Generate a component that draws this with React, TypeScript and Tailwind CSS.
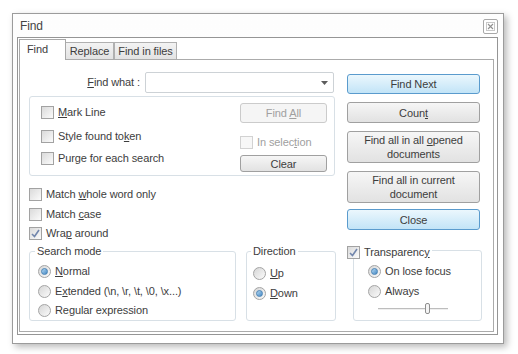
import type { ReactNode } from "react";

const ink = "text-[#3d3d3d]";

function Check({ checked, disabled }: { checked?: boolean; disabled?: boolean }) {
  return (
    <span
      className={`flex h-[13px] w-[13px] shrink-0 items-center justify-center border ${
        disabled ? "border-[#d2d2d2] bg-[#f7f7f7]" : "border-[#a2a2a2] bg-gradient-to-br from-[#dadada] to-[#fbfbfb]"
      }`}
    >
      {checked && (
        <svg width="11" height="11" viewBox="0 0 11 11">
          <path d="M2 6 L4.5 8.5 L9 2" fill="none" stroke="#7286ac" strokeWidth="1.6" />
        </svg>
      )}
    </span>
  );
}

function Radio({ on }: { on?: boolean }) {
  return (
    <span className="flex h-[13px] w-[13px] shrink-0 items-center justify-center rounded-full border border-[#a4a4a4] bg-gradient-to-br from-[#d6d6d6] to-[#fbfbfb]">
      {on && (
        <span className="h-[7px] w-[7px] rounded-full border border-[#4a84b6] bg-gradient-to-br from-[#b3d8f2] to-[#4589c4]" />
      )}
    </span>
  );
}

function Row({ children, box, className = "" }: { children: ReactNode; box: ReactNode; className?: string }) {
  return (
    <div className={`flex h-[13px] items-center gap-[4px] ${className}`}>
      {box}
      <span className="whitespace-nowrap leading-[13px]">{children}</span>
    </div>
  );
}

function Btn({
  children,
  blue,
  disabled,
  className = "",
}: {
  children: ReactNode;
  blue?: boolean;
  disabled?: boolean;
  className?: string;
}) {
  const skin = blue
    ? "border-[#5a9bcd] bg-gradient-to-b from-[#ebf7fd] to-[#c2e4f7]"
    : disabled
      ? "border-[#cbcbcb] bg-[#f5f5f5] text-[#a0a0a0]"
      : "border-[#a0a0a0] bg-gradient-to-b from-[#f6f6f6] to-[#e2e2e2]";
  return (
    <div
      className={`flex items-center justify-center rounded-[3px] border text-center leading-[14px] ${skin} ${className}`}
    >
      {children}
    </div>
  );
}

function Group({ title, className = "", children }: { title: string; className?: string; children: ReactNode }) {
  return (
    <fieldset className={`rounded-[3px] border border-[#d8e0e6] ${className}`}>
      <legend className="leading-[13px]">{title}</legend>
      {children}
    </fieldset>
  );
}

export default function App() {
  return (
    <div
      className={`h-[354px] w-[518px] overflow-hidden bg-white pl-[12px] pt-[13px] text-[11px] tracking-[-0.1px] ${ink} font-['Liberation_Sans',Arial,sans-serif]`}
    >
      <div className="flex h-[331px] w-[492px] flex-col border border-[#9b9b9b] bg-gradient-to-b from-[#fdfdfd] to-white shadow-[3px_3px_7px_rgba(0,0,0,0.28)]">
        {/* title bar */}
        <div className="flex h-[23px] items-start justify-between pl-[7px] pr-[5px]">
          <span className="pt-[5px] text-[12px] leading-[14px] text-[#444]">Find</span>
          <div className="mt-[5px] flex h-[15px] w-[15px] items-center justify-center rounded-[2px] border border-[#a8a8a8] bg-white">
            <svg width="9" height="9" viewBox="0 0 9 9">
              <rect x="0.5" y="0.5" width="8" height="8" fill="none" stroke="#c8c8c8" />
              <path d="M2 2 L7 7 M7 2 L2 7" stroke="#909090" strokeWidth="1.1" />
            </svg>
          </div>
        </div>

        {/* client frame */}
        <div className="ml-[4px] h-[298px] w-[481px] border border-[#959595] bg-white">
          <div className="ml-[1px] mt-[1px] flex h-[20px] items-end">
            <div className="relative z-10 -mb-px h-[21px] w-[47px] border border-b-0 border-[#a8a8a8] bg-white pl-[7px] pt-[3px] leading-[13px]">
              Find
            </div>
            <div className="ml-[-1px] h-[17px] w-[49px] border border-b-0 border-[#b0b0b0] bg-gradient-to-b from-[#f3f3f3] to-[#e3e3e3] pt-[2px] text-center leading-[13px]">
              Replace
            </div>
            <div className="h-[17px] w-[63px] border border-b-0 border-[#b0b0b0] bg-gradient-to-b from-[#f3f3f3] to-[#e3e3e3] pt-[2px] text-center leading-[13px]">
              Find in files
            </div>
          </div>

          {/* tab page */}
          <div className="ml-[1px] flex h-[273px] w-[475px] border border-[#ababab] bg-white">
            {/* left column */}
            <div className="w-[320px] pt-[12px]">
              <div className="flex h-[21px] items-center">
                <div className="w-[121px] pr-[1px] text-right leading-[13px]">
                  <u>F</u>ind what :
                </div>
                <div className="ml-[4px] flex h-[21px] w-[189px] items-center justify-end rounded-[2px] border border-[#cdd2d6] bg-white pr-[5px]">
                  <svg width="7" height="4" viewBox="0 0 7 4">
                    <path d="M0 0 H7 L3.5 4 Z" fill="#5c5c5c" />
                  </svg>
                </div>
              </div>

              <div className="ml-[9px] mt-[3px] flex h-[80px] w-[306px] rounded-[3px] border border-[#d8e0e6]">
                <div className="flex flex-col pl-[11px] pt-[9px]">
                  <Row box={<Check />}>
                    <u>M</u>ark Line
                  </Row>
                  <Row box={<Check />} className="mt-[11px]">
                    Style found to<u>k</u>en
                  </Row>
                  <Row box={<Check />} className="mt-[9px]">
                    Purge for each search
                  </Row>
                </div>
                <div className="ml-auto mr-[7px] flex w-[87px] flex-col pt-[6px]">
                  <Btn disabled className="h-[20px]">
                    <span>
                      Find <u>A</u>ll
                    </span>
                  </Btn>
                  <Row box={<Check disabled />} className="mt-[13px] text-[#a0a0a0]">
                    In selec<u>t</u>ion
                  </Row>
                  <Btn className="mt-[6px] h-[17px]">Clear</Btn>
                </div>
              </div>

              <div className="ml-[9px] mt-[12px] flex flex-col">
                <Row box={<Check />}>
                  Match <u>w</u>hole word only
                </Row>
                <Row box={<Check />} className="mt-[7px]">
                  Match <u>c</u>ase
                </Row>
                <Row box={<Check checked />} className="mt-[6px]">
                  Wra<u>p</u> around
                </Row>
              </div>

              <div className="ml-[9px] mt-[5px] flex">
                <Group title="Search mode" className="h-[76px] w-[207px] [&>legend]:ml-[5px] [&>legend]:px-[2px]">
                  <div className="flex flex-col pl-[8px] pt-[7px]">
                    <Row box={<Radio on />}>
                      <u>N</u>ormal
                    </Row>
                    <Row box={<Radio />} className="mt-[7px]">
                      E<u>x</u>tended (\n, \r, \t, \0, \x...)
                    </Row>
                    <Row box={<Radio />} className="mt-[6px]">
                      Re<u>g</u>ular expression
                    </Row>
                  </div>
                </Group>
                <Group title="Direction" className="ml-[10px] h-[76px] w-[90px] [&>legend]:ml-[4px] [&>legend]:px-[2px]">
                  <div className="flex flex-col pl-[6px] pt-[9px]">
                    <Row box={<Radio />}>
                      <u>U</u>p
                    </Row>
                    <Row box={<Radio on />} className="mt-[7px]">
                      <u>D</u>own
                    </Row>
                  </div>
                </Group>
              </div>
            </div>

            {/* right column */}
            <div className="ml-[7px] flex w-[133px] flex-col pt-[14px]">
              <Btn blue className="h-[20px]">
                Find Next
              </Btn>
              <Btn className="mt-[8px] h-[21px]">
                <span>
                  Coun<u>t</u>
                </span>
              </Btn>
              <Btn className="mt-[8px] h-[32px]">
                <span>
                  Find all in all <u>o</u>pened
                  <br />
                  documents
                </span>
              </Btn>
              <Btn className="mt-[8px] h-[32px]">
                <span>
                  Find all in current
                  <br />
                  document
                </span>
              </Btn>
              <Btn blue className="mt-[6px] h-[21px]">
                Close
              </Btn>

              <Row box={<Check checked />} className="relative z-10 mt-[16px] w-fit bg-white pr-[2px]">
                Transparenc<u>y</u>
              </Row>
              <div className="-mt-[9px] ml-[6px] flex h-[71px] w-[129px] flex-col rounded-[3px] border border-[#d8e0e6] pl-[14px] pt-[14px]">
                <Row box={<Radio on />}>On lose focus</Row>
                <Row box={<Radio />} className="mt-[7px]">
                  Always
                </Row>
                <div className="relative ml-[10px] mt-[5px] flex h-[11px] w-[70px] items-center">
                  <div className="h-[2px] w-full border-b border-t border-b-[#efefef] border-t-[#bdbdbd]" />
                  <div className="absolute left-[47px] top-0 h-[11px] w-[5px] rounded-[2px] border border-[#8f8f8f] bg-[#f5f5f5]" />
                </div>
              </div>
            </div>
          </div>
        </div>
      </div>
    </div>
  );
}
